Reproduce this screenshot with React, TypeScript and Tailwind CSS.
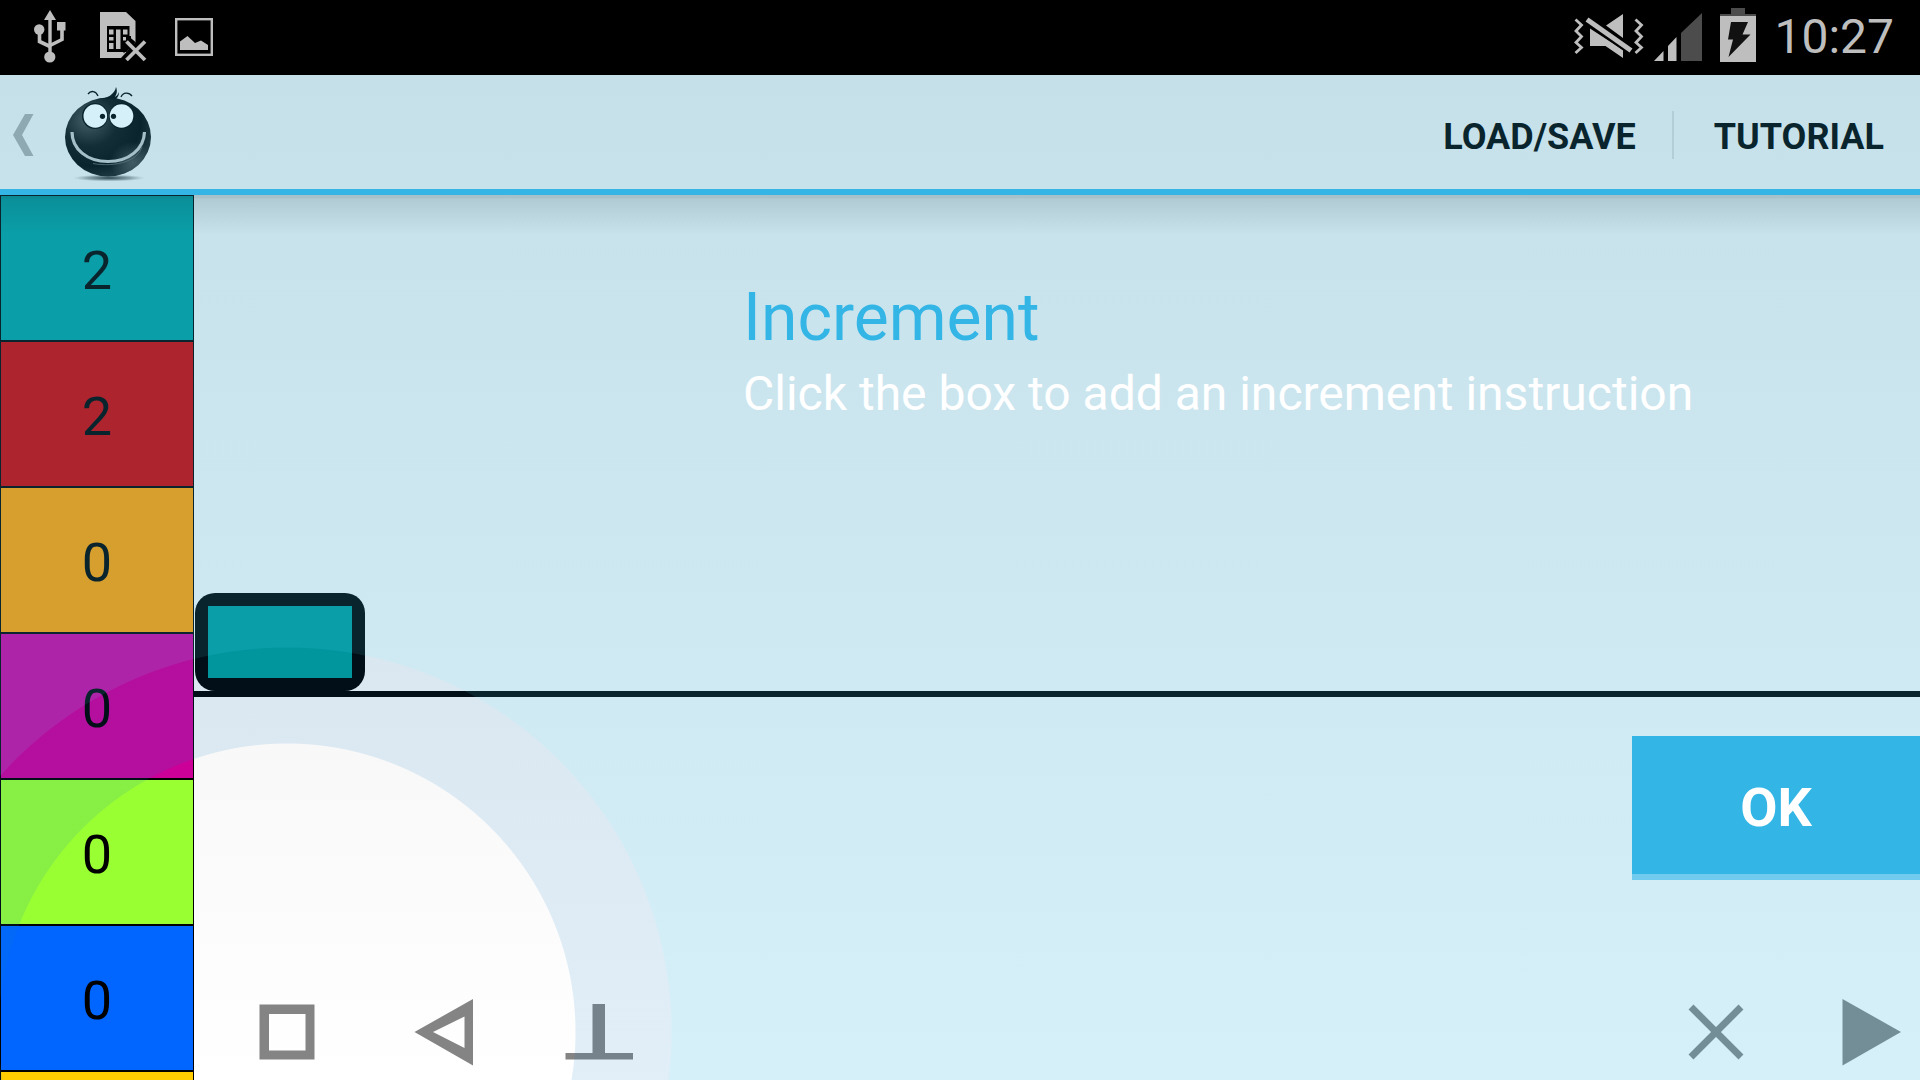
import React from "react";

const registers = [
  { value: 2, color: "bg-[#009999]" },
  { value: 2, color: "bg-[#cc0000]" },
  { value: 0, color: "bg-[#ff9900]" },
  { value: 0, color: "bg-[#cc0099]" },
  { value: 0, color: "bg-[#99ff33]" },
  { value: 0, color: "bg-[#0066ff]" },
  { value: null, color: "bg-[#ffcc00]" },
];

function UsbIcon() {
  return (
    <svg viewBox="0 0 32 53" className="h-[53px] w-8" fill="#bebebe" aria-hidden="true">
      <path d="M16 0l6 10h-4.300v32h-3.400V10H10z" />
      <circle cx="5.200" cy="19.500" r="5.200" />
      <rect x="23" y="12" width="8.500" height="8.500" />
      <circle cx="15.800" cy="47" r="5.600" />
      <path d="M5.500 22v9.500L16 36.500M28 20v9.500L16 35.500" fill="none" stroke="#bebebe" strokeWidth="3.600" />
    </svg>
  );
}

function SimIcon() {
  return (
    <svg viewBox="0 0 47 50" className="h-[50px] w-[47px]" aria-hidden="true">
      <path d="M0 0h26l9.500 9v21L21 46H0z" fill="#bebebe" />
      <path d="M7 14h22.500v11l6 5-9 10h-19.500z" fill="#000" />
      <path d="M9 17.500h4.500v5H9zM9 25h4.500v3.500H9zM9 31h4.500v6H9zM16 17.500h4.500V37H16zM23 17.500h4.500v5H23zM23 25h3v3.500h-3z" fill="#bebebe" />
      <path d="M29.500 24v6M23 40l4-4" stroke="#000" strokeWidth="3" />
      <path d="M26.500 29.500L45 48M45 29.500L26.500 48" stroke="#000" strokeWidth="8" />
      <path d="M26.500 29.500L45 48M45 29.500L26.500 48" stroke="#bebebe" strokeWidth="3.800" />
    </svg>
  );
}

function PictureIcon() {
  return (
    <svg viewBox="0 0 38 38" className="size-[38px]" aria-hidden="true">
      <rect x="1.200" y="1.200" width="35.600" height="35.600" fill="none" stroke="#bebebe" strokeWidth="2.400" />
      <path d="M5 32v-8.500l7.500-5.500 7.500 7 6-2.500 7 4.500v5z" fill="#bebebe" />
    </svg>
  );
}

function MutedVibrateIcon() {
  return (
    <svg viewBox="0 0 70 46" className="h-[46px] w-[70px]" fill="#bebebe" aria-hidden="true">
      <path d="M1.500 5.500l6 5.500-5.500 6 5.500 5.500L2 28.500l5.500 5-6 5.500M61.500 5.500l6 5.500-5.500 6 5.500 5.500-5.500 6 5.500 5-6 5.500" fill="none" stroke="#bebebe" strokeWidth="2.800" />
      <path d="M49 0v24L32 11.500zM16 14.500V32h15.500L49 44v-8z" />
      <path d="M13 5.500L57 36.500" stroke="#000" strokeWidth="9" />
      <path d="M13 5.500L57 36.500" stroke="#bebebe" strokeWidth="5" />
    </svg>
  );
}

function SignalIcon() {
  return (
    <svg viewBox="0 0 48 48" className="size-12" aria-hidden="true">
      <path d="M0 48l9.500-10v10zM14 48V33l8.500-9v24z" fill="#bebebe" />
      <path d="M27 48V20L48 0v48z" fill="#4c4c4c" />
    </svg>
  );
}

function BatteryIcon() {
  return (
    <svg viewBox="0 0 36 54" className="h-[54px] w-9" aria-hidden="true">
      <path d="M11 0h14v6h11v2H0V6h11z" fill="#4c4c4c" />
      <path d="M0 8h36v46H0z" fill="#bebebe" />
      <path d="M11 14h17l-5.500 12.500h8L8.500 49l4.500-17.500H8z" fill="#111" />
    </svg>
  );
}

function MonsterLogo() {
  return (
    <svg viewBox="0 0 96 100" className="h-[100px] w-24" aria-hidden="true">
      <defs>
        <radialGradient id="body" cx="0.32" cy="0.3" r="0.72" fx="0.26" fy="0.28">
          <stop offset="0" stopColor="#4a4a4a" />
          <stop offset="0.45" stopColor="#0c0c0c" />
          <stop offset="0.8" stopColor="#000" />
          <stop offset="1" stopColor="#181818" />
        </radialGradient>
        <radialGradient id="rim" cx="0.78" cy="0.82" r="0.26">
          <stop offset="0" stopColor="#777" stopOpacity="0.5" />
          <stop offset="1" stopColor="#777" stopOpacity="0" />
        </radialGradient>
        <radialGradient id="ground">
          <stop offset="0" stopColor="#222" />
          <stop offset="0.6" stopColor="#666" stopOpacity="0.6" />
          <stop offset="1" stopColor="#999" stopOpacity="0" />
        </radialGradient>
      </defs>
      <ellipse cx="49" cy="95" rx="36" ry="3.500" fill="url(#ground)" />
      <ellipse cx="48" cy="54" rx="43" ry="39.500" fill="url(#body)" />
      <ellipse cx="48" cy="54" rx="43" ry="39.500" fill="url(#rim)" />
      <path d="M38 16c9 0 17-5 18-12 2 5 0 8-1 10 2-1 3-3 4-5 0 3-1 5-3 7z" fill="#000" />
      <path d="M28 11c3-4 8-3 10 2M61 14c2-5 8-5 11-1" fill="none" stroke="#000" strokeWidth="1.300" />
      <circle cx="35" cy="33" r="13" fill="#000" />
      <circle cx="62" cy="33" r="13" fill="#000" />
      <circle cx="35.300" cy="33" r="11.800" fill="#fff" />
      <circle cx="61.500" cy="33" r="11.800" fill="#fff" />
      <circle cx="42.500" cy="33.300" r="2.600" fill="#000" />
      <circle cx="53.500" cy="33.300" r="2.600" fill="#000" />
      <path d="M12 49c0 17 15 29.500 36 29.500S84 66 84.500 49" fill="none" stroke="#c2c2c2" strokeWidth="3.200" />
      <path d="M33 80.500c10 2 24 1.500 33-2s14-8 16-15" fill="none" stroke="#666" strokeWidth="0.800" />
    </svg>
  );
}

const toolIcons: Record<string, React.ReactNode> = {
  Stop: <path fillRule="evenodd" d="M20.500 20.500h55v55h-55zM30 30v36.500h36.500V30z" />,
  Back: <path fillRule="evenodd" d="M19.500 48L78 15v66.500zM38 48l31.500 16V32.500z" />,
  End: <path d="M41.500 20H54v49h28v6.500H14.500V69h27z" />,
  Delete: <path d="M23 23l50 50M73 23l-50 50" stroke="#848484" strokeWidth="7" />,
  Run: <path d="M18.500 15L77 48 18.500 81.500z" />,
};

function Tool({ name }: { name: string }) {
  return (
    <button type="button" aria-label={name} className="size-24">
      <svg viewBox="0 0 96 96" className="size-24" fill="#848484" aria-hidden="true">
        {toolIcons[name]}
      </svg>
    </button>
  );
}

function StatusBar() {
  return (
    <div className="flex h-[75px] shrink-0 items-center justify-between bg-black pb-[2px] pl-[34px] pr-[26px] text-[#bebebe]">
      <div className="flex items-center">
        <UsbIcon />
        <div className="pl-[34px]"><SimIcon /></div>
        <div className="pl-7"><PictureIcon /></div>
      </div>
      <div className="flex items-center">
        <MutedVibrateIcon />
        <div className="pl-[10px]"><SignalIcon /></div>
        <div className="pb-[4px] pl-[18px]"><BatteryIcon /></div>
        <time className="pl-[18px] text-[48px] leading-[72px]">10:27</time>
      </div>
    </div>
  );
}

function ActionBar() {
  return (
    <header className="flex h-[120px] shrink-0 items-center justify-between border-b-6 border-[#33b5e5] pr-9">
      <button type="button" aria-label="Navigate up" className="flex items-center pl-3 pt-[2px]">
        <svg viewBox="0 0 22 42" className="mt-1 h-[42px] w-[22px]" fill="#a6a6a6" aria-hidden="true">
          <path d="M13 0h8.500L10 21l11.500 21H13L1 21z" />
        </svg>
        <span className="pl-[26px]"><MonsterLogo /></span>
      </button>
      <nav className="flex items-center pt-[6px] text-[36px] font-bold leading-[48px] text-black">
        <button type="button" className="pt-1">LOAD/SAVE</button>
        <span className="ml-9 mr-10 h-12 w-[2px] bg-[#d4d4d4]" />
        <button type="button" className="pt-1">TUTORIAL</button>
      </nav>
    </header>
  );
}

export default function App() {
  return (
    <div className="flex h-screen flex-col overflow-hidden font-['Roboto',sans-serif]">
      <StatusBar />
      <div className="relative flex min-h-0 flex-1 flex-col bg-linear-to-b from-[#ebebeb] to-white">
        <ActionBar />
        <div className="relative flex min-h-0 flex-1">
          <aside className="w-[194px] shrink-0 overflow-hidden">
            {registers.map((r, i) => (
              <button
                key={i}
                type="button"
                aria-label={`Register ${i + 1}`}
                className={`flex h-[146px] w-full items-center justify-center border border-black pt-[5px] text-[54px] leading-[64px] text-black ${r.color}`}
              >
                {r.value}
              </button>
            ))}
          </aside>
          <main className="flex min-w-0 flex-1 flex-col">
            <div className="flex flex-1 items-end border-b-6 border-black pl-px">
              <button
                type="button"
                aria-label="Increment instruction"
                className="h-[98px] w-[170px] rounded-[20px] bg-black p-[13px]"
              >
                <span className="block size-full bg-[#009999]" />
              </button>
            </div>
            <div className="flex h-[383px] items-end justify-between pl-[45px]">
              <div className="flex gap-[60px]">
                <Tool name="Stop" />
                <Tool name="Back" />
                <Tool name="End" />
              </div>
              <div className="flex gap-[60px]">
                <Tool name="Delete" />
                <Tool name="Run" />
              </div>
            </div>
          </main>
          <div className="pointer-events-none absolute inset-x-0 top-0 h-10 bg-[linear-gradient(rgba(0,0,0,0.18),rgba(0,0,0,0.17)_3px,rgba(0,0,0,0.12)_4px,transparent)]" />
        </div>
        <section className="pointer-events-none absolute inset-0 flex flex-col justify-between bg-[radial-gradient(circle_at_287px_calc(100%_-_48px),transparent_288px,rgba(10,120,195,0.12)_289px,rgba(10,120,195,0.12)_384px,rgba(51,181,229,0.2)_385px)]">
          <div className="pl-[743px] pt-51">
            <h1 className="text-[66px] leading-[78px] text-[#33b5e5]">Increment</h1>
            <p className="pt-[5px] text-[48px] leading-[64px] text-white">
              Click the box to add an increment instruction
            </p>
          </div>
          <button
            type="button"
            className="pointer-events-auto mb-[200px] h-36 w-72 self-end border-b-6 border-[#70cbee] bg-[#33b5e5] pt-[5px] text-[54px] font-bold leading-[64px] text-white"
          >
            OK
          </button>
        </section>
      </div>
    </div>
  );
}
